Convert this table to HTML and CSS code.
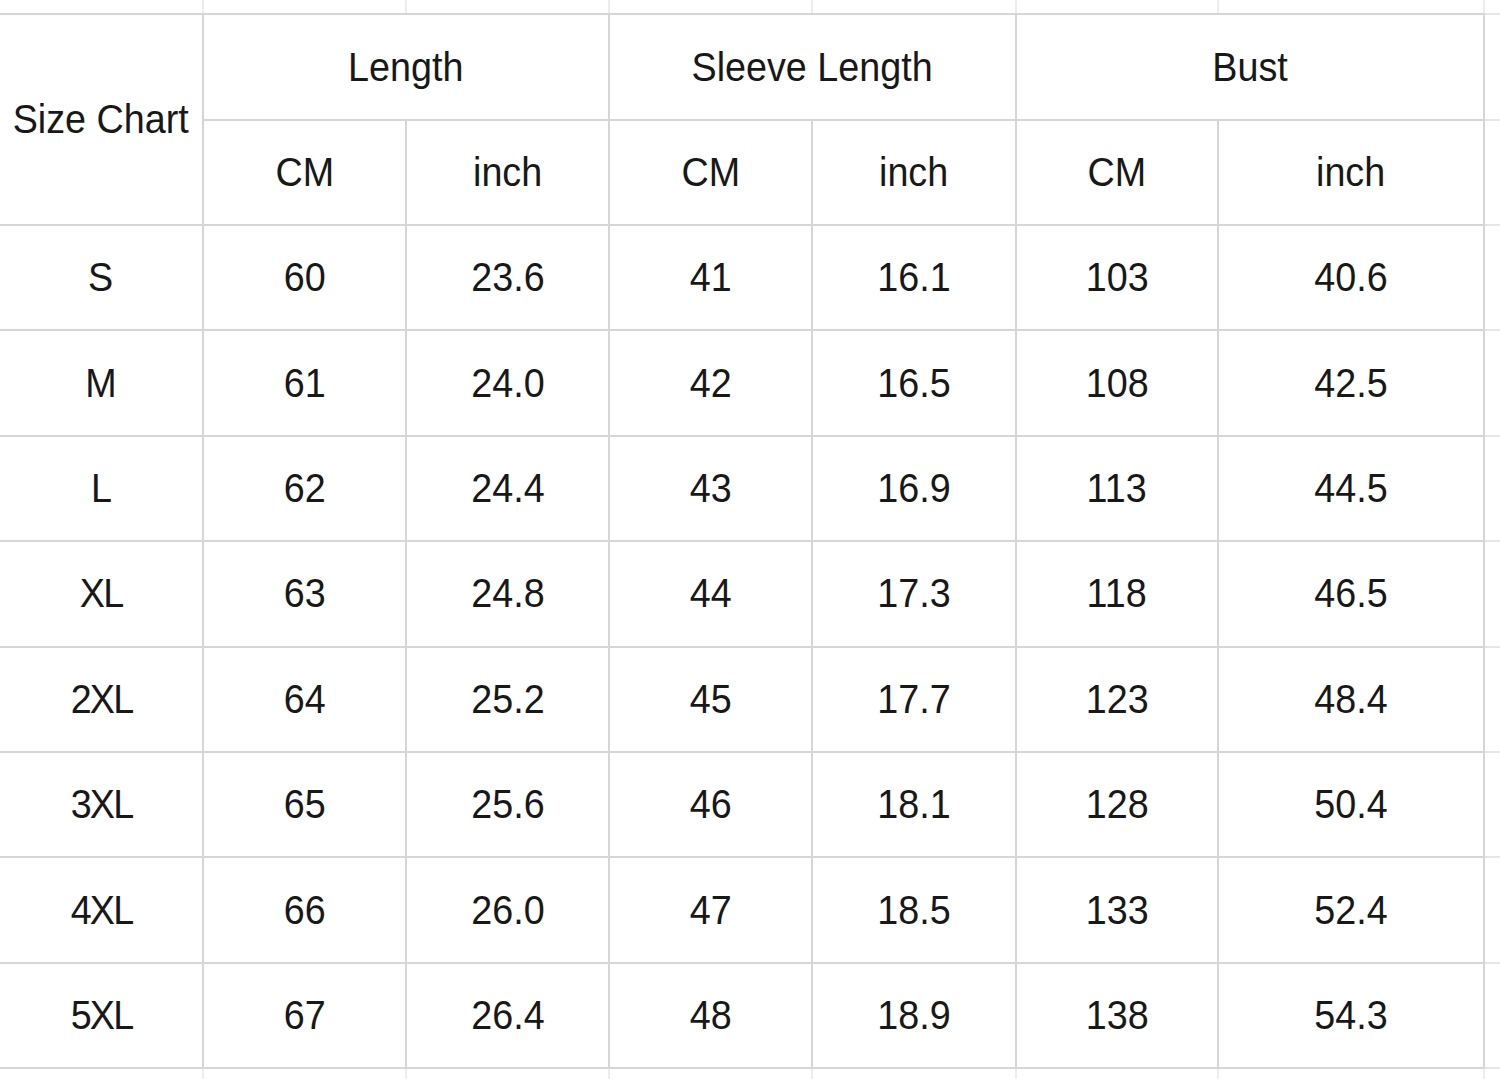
FILE: index.html
```html
<!DOCTYPE html>
<html>
<head>
<meta charset="utf-8">
<link rel="stylesheet" href="styles.css">
</head>
<body>
<table class="chart">
  <colgroup>
    <col class="c-size"><col class="c-a"><col class="c-b"><col class="c-c"><col class="c-d"><col class="c-e"><col class="c-f"><col class="c-pad">
  </colgroup>
  <tr class="r-top">
    <td></td><td></td><td></td><td></td><td></td><td></td><td></td><td class="pad"></td>
  </tr>
  <tr class="r-h1">
    <td rowspan="2" class="first"><span class="t">Size Chart</span></td>
    <td colspan="2"><span class="t">Length</span></td>
    <td colspan="2"><span class="t">Sleeve Length</span></td>
    <td colspan="2"><span class="t">Bust</span></td>
    <td class="pad"></td>
  </tr>
  <tr class="r-h2">
    <td><span class="t">CM</span></td><td><span class="t">inch</span></td><td><span class="t">CM</span></td><td><span class="t">inch</span></td><td><span class="t">CM</span></td><td><span class="t">inch</span></td><td class="pad"></td>
  </tr>
  <tr class="r-d"><td class="first"><span class="t">S</span></td><td><span class="t">60</span></td><td><span class="t">23.6</span></td><td><span class="t">41</span></td><td><span class="t">16.1</span></td><td><span class="t">103</span></td><td><span class="t">40.6</span></td><td class="pad"></td></tr>
  <tr class="r-d"><td class="first"><span class="t">M</span></td><td><span class="t">61</span></td><td><span class="t">24.0</span></td><td><span class="t">42</span></td><td><span class="t">16.5</span></td><td><span class="t">108</span></td><td><span class="t">42.5</span></td><td class="pad"></td></tr>
  <tr class="r-d"><td class="first"><span class="t">L</span></td><td><span class="t">62</span></td><td><span class="t">24.4</span></td><td><span class="t">43</span></td><td><span class="t">16.9</span></td><td><span class="t">113</span></td><td><span class="t">44.5</span></td><td class="pad"></td></tr>
  <tr class="r-d"><td class="first"><span class="t xl">XL</span></td><td><span class="t">63</span></td><td><span class="t">24.8</span></td><td><span class="t">44</span></td><td><span class="t">17.3</span></td><td><span class="t">118</span></td><td><span class="t">46.5</span></td><td class="pad"></td></tr>
  <tr class="r-d"><td class="first"><span class="t xl">2XL</span></td><td><span class="t">64</span></td><td><span class="t">25.2</span></td><td><span class="t">45</span></td><td><span class="t">17.7</span></td><td><span class="t">123</span></td><td><span class="t">48.4</span></td><td class="pad"></td></tr>
  <tr class="r-d"><td class="first"><span class="t xl">3XL</span></td><td><span class="t">65</span></td><td><span class="t">25.6</span></td><td><span class="t">46</span></td><td><span class="t">18.1</span></td><td><span class="t">128</span></td><td><span class="t">50.4</span></td><td class="pad"></td></tr>
  <tr class="r-d"><td class="first"><span class="t xl">4XL</span></td><td><span class="t">66</span></td><td><span class="t">26.0</span></td><td><span class="t">47</span></td><td><span class="t">18.5</span></td><td><span class="t">133</span></td><td><span class="t">52.4</span></td><td class="pad"></td></tr>
  <tr class="r-d"><td class="first"><span class="t xl">5XL</span></td><td><span class="t">67</span></td><td><span class="t">26.4</span></td><td><span class="t">48</span></td><td><span class="t">18.9</span></td><td><span class="t">138</span></td><td><span class="t">54.3</span></td><td class="pad"></td></tr>
  <tr class="r-bot">
    <td></td><td></td><td></td><td></td><td></td><td></td><td></td><td class="pad"></td>
  </tr>
</table>
</body>
</html>
```

FILE: styles.css
```css
html, body {
  margin: 0;
  padding: 0;
  background: #ffffff;
  overflow: hidden;
}

.chart {
  border-collapse: collapse;
  table-layout: fixed;
  width: 1500px;
  font-family: "Liberation Sans", Arial, sans-serif;
  font-size: 41px;
  color: #181818;
}

.c-size { width: 203px; }
.c-a { width: 203px; }
.c-b { width: 203px; }
.c-c { width: 203px; }
.c-d { width: 204px; }
.c-e { width: 202px; }
.c-f { width: 266px; }
.c-pad { width: 16px; }

.chart td {
  border: 2px solid #d6d6d6;
  padding: 0;
  text-align: center;
  vertical-align: middle;
  line-height: 1;
  white-space: nowrap;
}

.t {
  display: inline-block;
  transform: scaleX(0.92);
}

.t.xl {
  letter-spacing: -2px;
}

.chart tr td:first-child {
  border-left: none;
}

.chart td.pad {
  border-right: none;
  border-top-color: #e6e6e6;
  border-bottom-color: #e6e6e6;
}

.r-top td {
  height: 13px;
  border-top: none;
  border-left-color: #ececec;
  border-right-color: #ececec;
}

.r-h1 td { height: 104px; }
.r-h2 td { height: 103px; }
.r-d td { height: 103.4px; }

.r-bot td {
  height: 10px;
  border-bottom: none;
  border-left-color: #eeeeee;
  border-right-color: #eeeeee;
}

.r-top td.pad,
.r-bot td.pad {
  border-left-color: #e0e0e0;
}
```
